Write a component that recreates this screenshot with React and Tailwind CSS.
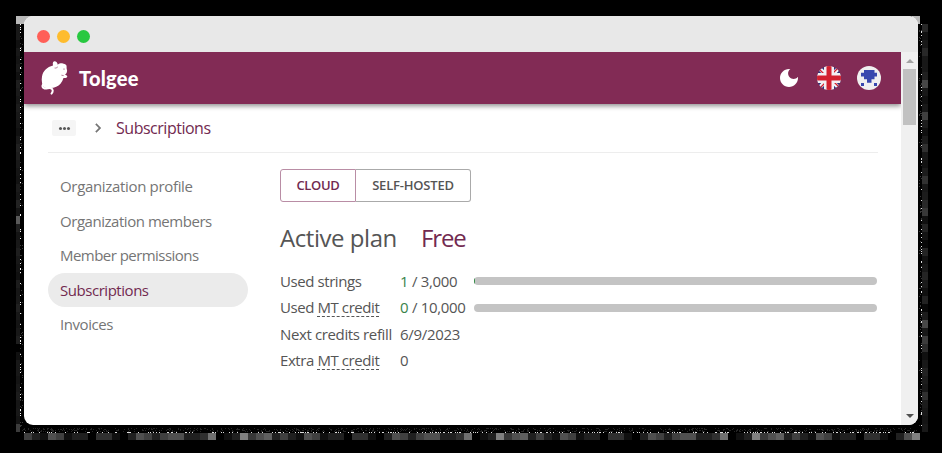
import React from 'react';

// Grey levels of the shadow's 8px tiles; the bottom edge repeats every 32 tiles.
const PERIOD = [64,32,16,80,64,16,32,32,0,48,48,16,0,32,80,64,32,64,80,80,32,32,48,112,0,16,32,128,56,80,96,32];
const BOTTOM = Array.from({ length: 112 }, (_, i) => (i === 111 ? 128 : PERIOD[i % 32]));
const LEFT = [24,24,16,24,20,24,16,30,26,22,28,24,20,16,24,32,28,24,20,18,26,22,34,20,90,30,20,24,30,24,20,16,28,22,24,32,24,20,24,30,0,16,24,24,20,24,28,22,24,20,60];
const RIGHT = [40,16,24,40,24,24,32,70,24,16,24,64,28,16,28,48,24,18,28,50,24,28,40,56,16,36,20,8,36,18,24,36,26,16,34,8,28,72,24,60,44,16,24,34,28,24,48,28,24,20,24];

function noise(seed, count) {
  let s = seed;
  const next = () => {
    s = (s * 1103515245 + 12345) % 2147483648;
    return s / 2147483648;
  };
  return Array.from({ length: count }, () => [next(), next(), next()]);
}

function ShadowNoise() {
  return (
    <svg width="942" height="453" className="absolute inset-0" shapeRendering="crispEdges" aria-hidden="true">
      {BOTTOM.map((v, i) => <rect key={'b' + i} x={24 + i * 8} y="433" width="8" height="7" fill={`rgb(${v},${v},${v})`} />)}
      {LEFT.map((v, i) => <rect key={'l' + i} x="16" y={24 + i * 8} width="4" height="8" fill={`rgb(${v},${v},${v})`} />)}
      {RIGHT.map((v, i) => <rect key={'r' + i} x="922" y={24 + i * 8} width="6" height="8" fill={`rgb(${v},${v},${v})`} />)}
      <path d="M16 16h16v8H16zM912 16h8v8h-8z" fill="#b9b9b9" />
      {noise(7, 170).map(([a, b, c], i) => <rect key={'n' + i} x={c > 0.6 ? 20 : 20 + Math.floor(b * 3)} y={24 + Math.floor(a * 404)} width="1" height="1" fill={c > 0.6 ? '#fff' : '#3a3a3a'} />)}
      {noise(19, 170).map(([a, b, c], i) => <rect key={'m' + i} x={c > 0.6 ? 921 : 919 + Math.floor(b * 3)} y={24 + Math.floor(a * 404)} width="1" height="1" fill={c > 0.6 ? '#ddd' : '#3a3a3a'} />)}
      {noise(31, 1100).map(([a, b, c], i) => <rect key={'o' + i} x={22 + Math.floor(a * 897)} y={c > 0.75 ? 432 : 428 + Math.floor(b * 4)} width="1" height="1" fill={c > 0.75 ? '#ddd' : '#262626'} />)}
    </svg>
  );
}

function Mouse() {
  return (
    <svg width="28" height="36" viewBox="0 0 28 36" fill="#fff" aria-hidden="true">
      <path d="M13 5.5C12.2 2 13.8.9 15.5 1.5c1.7.5 2.1 2.2 2.2 3.2 1.3-1.2 3.2-1.5 5.1-1.3 2.8.2 4.2 1.7 3.8 3.8-.2 1.2.5 2.3.5 3.6l-.5 2.3c-.3.7-.8 1.2-1.6 1.3 1.4.5 2.3 1.2 2.3 2.1-.4 1.4-2 1.8-3.8 1.5-.6 2.2-1.6 4.1-3 5.8-2.2 2.7-6.2 4.3-10.2 4.2-3 .1-5.1-.2-6.5-.6C2.2 24.6 1.2 20.6 2 16.4 3 10.8 7 7.1 13 5.5Z" />
      <path d="M3.4 24c-1.7 2-1.1 4 1.2 4.5 2.3.5 4.1-1 6.2-.3 2.6.9 2.3 3.6.7 5.4" fill="none" stroke="#fff" strokeWidth="2" strokeLinecap="round" />
      <path d="M14.6 8c1.2.2 2.4-.2 3.2-1.2M21.4 15.2l2.3.4" fill="none" stroke="#822b55" strokeWidth=".6" />
      <circle cx="24" cy="9" r=".6" fill="#822b55" />
    </svg>
  );
}

function Flag() {
  return (
    <svg width="24" height="24" viewBox="0 0 24 24" aria-hidden="true">
      <defs><clipPath id="disc"><circle cx="12" cy="12" r="12" /></clipPath></defs>
      <g clipPath="url(#disc)">
        <path fill="#29337a" d="M0 0h24v24H0z" />
        <path stroke="#f3eef2" strokeWidth="4" d="m0 0 24 24M24 0 0 24" />
        <path stroke="#d32030" strokeWidth="1.3" d="m0 1 9 9M23 0l-9 9M24 23l-9-9M1 24l9-9" />
        <path stroke="#f3eef2" strokeWidth="10" d="M12 0v24M0 12h24" />
        <path stroke="#d32030" strokeWidth="5" d="M12 0v24M0 12h24" />
      </g>
    </svg>
  );
}

function Avatar() {
  return (
    <svg width="24" height="24" viewBox="0 0 24 24" aria-hidden="true">
      <circle cx="12" cy="12" r="12" fill="#f0f0f0" />
      <path fill="#3848ae" d="M7 4h10.5v2.7H7zM4 6.7h16v3.8H4zM7 10.5h10.5v2.8H7zM10 13.3h4.5v3.5H10zM4 17h3v3H4zM17 17h3v3h-3z" />
    </svg>
  );
}

const NAV = [
  ['Organization profile', 'tracking-[-0.33px]'],
  ['Organization members', 'tracking-[-0.46px]'],
  ['Member permissions', 'tracking-[-0.54px]'],
  ['Subscriptions', 'tracking-[-0.46px]'],
  ['Invoices', 'tracking-[-0.42px]'],
];

function Credit() {
  return <span className="inline-block h-[19px] border-b border-dashed border-[#555] leading-[19px]">MT credit</span>;
}

function Bar({ used }) {
  return (
    <div className={used ? 'h-2 w-[403px] overflow-hidden rounded-full bg-[#c4c4c4]' : 'mt-[2px] h-2 w-[403px] rounded-full bg-[#c4c4c4]'}>
      {used && <div className="h-full w-px bg-[#2f8a43]" />}
    </div>
  );
}

export default function App() {
  return (
    <div className="relative h-[453px] w-[942px] overflow-hidden bg-black px-6 pt-4 font-['Open_Sans','Noto_Sans',sans-serif]">
      <ShadowNoise />
      <div className="relative flex h-[409px] w-[894px] flex-col overflow-hidden rounded-[9px] bg-white">
        <div className="flex h-9 shrink-0 items-center gap-[7px] bg-[#e8e8e8] pl-[13.4px] pt-[5px]">
          <span className="size-[13px] rounded-full bg-[#ff5f57]" />
          <span className="size-[13px] rounded-full bg-[#febc2e]" />
          <span className="size-[13px] rounded-full bg-[#28c840]" />
        </div>
        <div className="flex min-h-0 flex-1">
          <div className="w-[877px] overflow-hidden">
            <header className="flex h-[52px] items-center bg-[#822b55] pl-4 pr-5 shadow-[0_2px_5px_rgba(0,0,0,0.45)]">
              <Mouse />
              <span className="ml-[11px] font-['Lato',sans-serif] text-[20px] font-black leading-6 tracking-[0.25px] text-white">Tolgee</span>
              <div className="ml-auto flex items-center gap-4">
                <svg width="24" height="24" viewBox="0 0 24 24" fill="#fff" aria-hidden="true"><path d="M12 3c-4.97 0-9 4.03-9 9s4.03 9 9 9 9-4.03 9-9c0-.46-.04-.92-.1-1.36-.98 1.37-2.58 2.26-4.4 2.26-2.98 0-5.4-2.42-5.4-5.4 0-1.81.89-3.42 2.26-4.4-.44-.06-.9-.1-1.36-.1z" /></svg>
                <Flag />
                <Avatar />
              </div>
            </header>
            <div className="mx-6 flex h-[49px] w-[830px] items-center border-b border-[#ededed] pl-1">
              <span className="flex h-4 w-6 items-center justify-center gap-px rounded-[2px] bg-[#f5f5f5]">
                <i className="size-[3px] rounded-full bg-[#555]" /><i className="size-[3px] rounded-full bg-[#555]" /><i className="size-[3px] rounded-full bg-[#555]" />
              </span>
              <svg className="ml-[13px]" width="18" height="18" viewBox="0 0 24 24" fill="#757575" stroke="#757575" strokeWidth=".5" aria-hidden="true"><path d="M10 6 8.59 7.41 13.17 12l-4.58 4.59L10 18l6-6z" /></svg>
              <span className="ml-[9px] text-[16px] tracking-[-0.48px] text-[#722a50]">Subscriptions</span>
            </div>
            <div className="flex px-6">
              <nav className="mt-4 w-[200px]">
                {NAV.map(([label, spacing]) => (
                  <div key={label} className={(label === 'Subscriptions'
                    ? 'flex h-[34.5px] items-center rounded-full bg-[#ebebeb] pl-3 text-[15px] text-[#722a50] '
                    : 'flex h-[34.5px] items-center pl-3 text-[15px] text-[#757575] ') + spacing}>{label}</div>
                ))}
              </nav>
              <main className="ml-8 mt-4 text-[#555]">
                <div className="flex h-[33px] w-[191px] text-[13px] font-semibold">
                  <div className="flex w-[76px] items-center justify-center rounded-l-[3px] border border-[#b98da5] tracking-[-0.3px] text-[#722a50]">CLOUD</div>
                  <div className="flex flex-1 items-center justify-center rounded-r-[3px] border border-l-0 border-[#aaa] tracking-[-0.2px]">SELF-HOSTED</div>
                </div>
                <div className="mt-[20px] flex h-8 items-center text-[24px]">
                  <span className="w-[141px] tracking-[-0.45px]">Active plan</span>
                  <span className="tracking-[-1.1px] text-[#722a50]">Free</span>
                </div>
                <div className="mt-[14px] grid grid-cols-[120px_74px_403px] grid-rows-[26px_26px_28px_25px] items-center whitespace-nowrap text-[15px] tracking-[-0.42px]">
                  <span>Used strings</span><span className="tracking-[-0.3px]"><b className="font-normal text-[#39834a]">1</b> / 3,000</span><Bar used />
                  <span>Used <Credit /></span><span className="tracking-[-0.3px]"><b className="font-normal text-[#39834a]">0</b> / 10,000</span><Bar />
                  <span className="tracking-[-0.37px]">Next credits refill</span><span className="tracking-[-0.3px]">6/9/2023</span><span />
                  <span>Extra <Credit /></span><span>0</span><span />
                </div>
              </main>
            </div>
          </div>
          <div className="flex w-[17px] flex-col items-center bg-[#f0f0f0] pb-[7px] pt-[7px]">
            <svg width="8" height="4" viewBox="0 0 8 4" fill="#a3a3a3"><path d="m4 0 4 4H0z" /></svg>
            <div className="mt-[6px] h-14 w-[13px] bg-[#c1c1c1]" />
            <svg className="mt-auto" width="8" height="4" viewBox="0 0 8 4" fill="#505050"><path d="M0 0h8L4 4z" /></svg>
          </div>
        </div>
      </div>
    </div>
  );
}
